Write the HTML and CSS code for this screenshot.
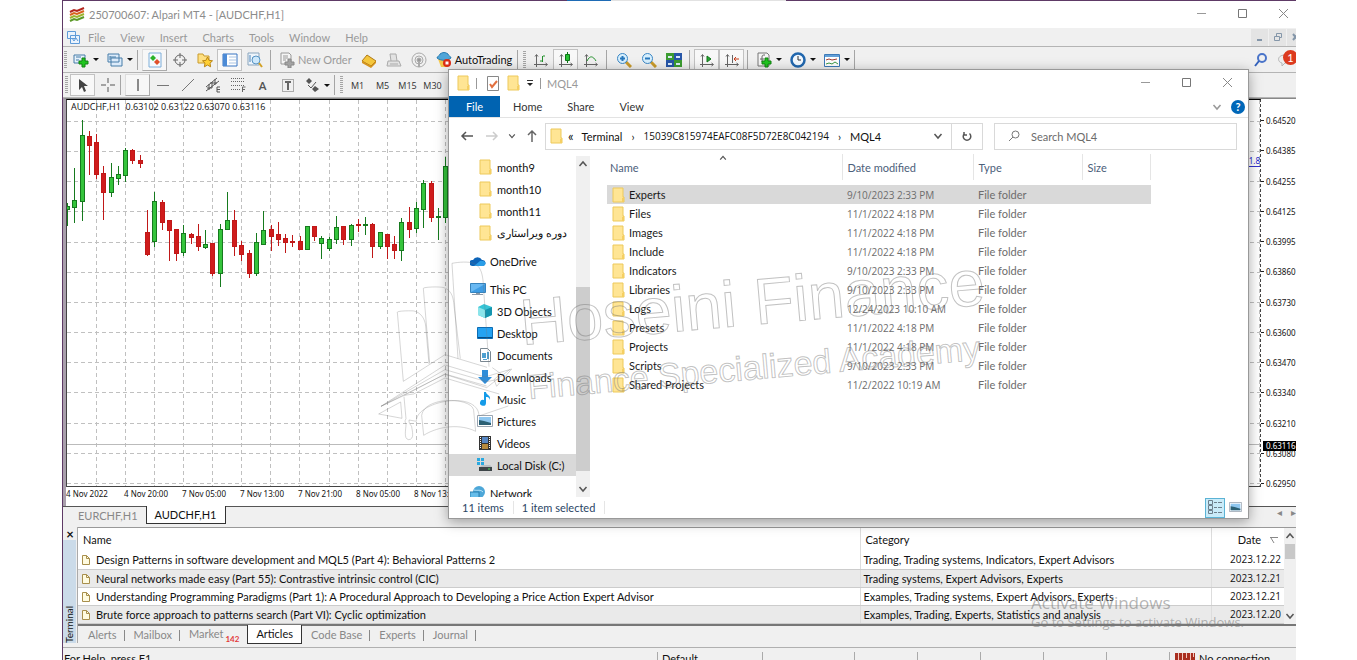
FILE: index.html
```
<!DOCTYPE html>
<html lang="en">
<head>
    <meta charset="UTF-8">
    <meta name="viewport" content="width=device-width, initial-scale=1.0">
    <title>250700607: Alpari MT4 - [AUDCHF,H1]</title>
    <link rel="stylesheet" href="styles.css">
</head>
<body>

<!-- Shared icons -->
<svg class="defs" width="0" height="0">
    <symbol id="folder" viewBox="0 0 13 16">
        <path d="M1 1h10v9h1v5H1z" fill="#ffe594" stroke="#edc95a"/>
        <path d="M10 15v-4l2-1v5z" fill="#f5cf62"/>
    </symbol>
    <symbol id="doc" viewBox="0 0 10 12">
        <path d="M1.500 1.500h4l3 3v6h-7z" fill="#fffbe0" stroke="#a88f4c"/>
        <path d="M5.500 1.500v3h3" fill="none" stroke="#a88f4c"/>
    </symbol>
    <symbol id="min" viewBox="0 0 11 11"><path d="M1 5.500h9" stroke="#999" fill="none"/></symbol>
    <symbol id="max" viewBox="0 0 11 11"><path d="M1.500 1.500h8v8h-8z" stroke="#777" fill="none"/></symbol>
    <symbol id="close" viewBox="0 0 11 11"><path d="M1 1l9 9M10 1l-9 9" stroke="#888" fill="none"/></symbol>
    <symbol id="down" viewBox="0 0 10 10"><path d="M1.500 3L5 7l3.500-4" stroke="#555" stroke-width="1.500" fill="none"/></symbol>
    <symbol id="up" viewBox="0 0 10 10"><path d="M1.500 7L5 3l3.500 4" stroke="#555" stroke-width="1.500" fill="none"/></symbol>
    <symbol id="axes" viewBox="0 0 16 16"><path d="M3.500 3v12M1 12.500h13M2 4.500l1.500-2 1.500 2M12.500 11l2 1.500-2 1.500" stroke="#666" fill="none"/></symbol>
    <symbol id="picture" viewBox="0 0 16 12">
        <path d="M.5.500h15v11H.5z" fill="#fff" stroke="#9aa5b1"/>
        <path d="M2 2h12v8H2z" fill="#8fc7f0"/>
        <path d="M2 5l5 1 7 2v2H2z" fill="#2c6175"/>
    </symbol>
</svg>

<div class="desktop">
    <div class="taskline"><i></i><b></b></div>

    <header class="titlebar">
        <svg class="i16" viewBox="0 0 16 16" fill="none" stroke-width="2">
            <path d="M1 5l4-2 3 1 7-3" stroke="#b3261e"/><path d="M1 8l4-2 3 1 7-3" stroke="#d8641f"/>
            <path d="M1 11l4-2 3 1 7-3" stroke="#9db52e"/><path d="M1 14l4-2 3 1 7-3" stroke="#5b9a28"/>
        </svg>
        <h1>250700607: Alpari MT4 - [AUDCHF,H1]</h1>
        <div class="controls">
            <button aria-label="Minimize"><svg><use href="#min"/></svg></button>
            <button aria-label="Maximize"><svg><use href="#max"/></svg></button>
            <button aria-label="Close"><svg><use href="#close"/></svg></button>
        </div>
    </header>

    <nav class="menubar">
        <svg class="i14" viewBox="0 0 14 14" fill="#eaf3fd" stroke="#5f9bd8">
            <path d="M1.500 1.500h8v7h-8zM4.500 5.500h9v8h-9z"/><path d="M6 8l2 3 2-3 2 3" fill="none"/>
        </svg>
        <button>File</button><button>View</button><button>Insert</button><button>Charts</button><button>Tools</button><button>Window</button><button>Help</button>
        <div class="mdi">
            <button aria-label="Minimize chart"><svg viewBox="0 0 10 10"><path d="M2 8h5" stroke="#8496a9" stroke-width="2"/></svg></button>
            <button aria-label="Restore chart"><svg viewBox="0 0 10 10" fill="none" stroke="#8496a9"><path d="M1.500 4.500h5v4h-5zM3.500 4V1.500h5v4h-2"/></svg></button>
            <button aria-label="Close chart"><svg viewBox="0 0 10 10"><path d="M2 2l5 6M7 2L2 8" stroke="#8496a9" stroke-width="2"/></svg></button>
        </div>
    </nav>

    <div class="toolbar">
        <span class="grip"></span>
        <button class="drop" aria-label="New chart"><svg class="i16" viewBox="0 0 16 16"><path d="M1 3h11v8H1z" fill="#e5f1fb" stroke="#477da8"/><path d="M3 5h5M3 8h3" stroke="#477da8"/><path d="M9 6h3v3h3v3h-3v3H9v-3H6V9h3z" fill="#1fc51f" stroke="#138213"/></svg></button>
        <button class="drop" aria-label="Profiles"><svg class="i16" viewBox="0 0 16 16" fill="#dcebfa" stroke="#477da8"><path d="M4 6h11v8H4zM1 2h11v8H1z"/><path d="M3 5h6M3 4v4"/></svg></button>
        <span class="sep"></span>
        <button class="raised" aria-label="Market Watch"><svg class="i16" viewBox="0 0 16 16"><path d="M2 1h12v14H2z" fill="#f5faff" stroke="#7eaed8"/><path d="M6 3l3 3-3 3-3-3z" fill="#2bb32b"/><path d="M10 7l3 3-3 3-3-3z" fill="#e0502a"/></svg></button>
        <button aria-label="Data Window"><svg class="i16" viewBox="0 0 16 16" fill="none" stroke="#666"><circle cx="8" cy="8" r="5"/><path d="M8 1v5M8 10v5M1 8h5M10 8h5"/></svg></button>
        <button aria-label="Navigator"><svg class="i16" viewBox="0 0 16 16"><path d="M1 2h5l1 2h5v7H1z" fill="#ffe082" stroke="#c99b2c"/><path d="M10.500 5l1.600 3.400 3.400.4-2.500 2.400.6 3.600-3.100-1.800-3.100 1.800.6-3.600L5.500 8.800l3.400-.4z" fill="#ffcf33" stroke="#b98412"/></svg></button>
        <button class="pressed" aria-label="Terminal"><svg class="i16" viewBox="0 0 16 16"><path d="M1 2h14v12H1z" fill="#fff" stroke="#3974c2"/><path d="M1 2h4v12H1z" fill="#4c8bd6"/><path d="M7 5h7M7 8h7M7 11h7" stroke="#aac4e2"/></svg></button>
        <button aria-label="Strategy Tester"><svg class="i16" viewBox="0 0 16 16"><path d="M1 1h11v12H1z" fill="#edf4fb" stroke="#8aa5bd"/><path d="M3 3v7M6 5v4" stroke="#4b83b8"/><circle cx="9" cy="8" r="4" fill="#cde8fb" stroke="#5794c4"/><path d="M12 11l3 4" stroke="#d3a125" stroke-width="2"/></svg></button>
        <span class="sep sep3"></span>
        <button class="text muted"><svg class="i16" viewBox="0 0 16 16"><path d="M2 1h8l2 2v9H2z" fill="#f5f5f5" stroke="#999"/><path d="M4 4h5M4 6h5M4 8h3" stroke="#999"/><path d="M9 7h3v3h3v3h-3v3H9v-3H6v-3h3z" fill="#a3a3a3" stroke="#888"/></svg>New Order</button>
        <button aria-label="MetaEditor"><svg class="i16" viewBox="0 0 16 16"><path d="M1 9l5-6 9 6-5 5z" fill="#f4c63c" stroke="#b07916"/><path d="M1 9v2l9 5 5-5V9l-5 5z" fill="#d5941e"/></svg></button>
        <button aria-label="Virtual hosting"><svg class="i16" viewBox="0 0 16 16" fill="#e2e2e2" stroke="#aaa"><path d="M5 9L4 2h6l1 7M2 9h11l2 5H1z"/><path d="M4 12h8"/></svg></button>
        <button aria-label="Signals"><svg class="i16" viewBox="0 0 16 16" fill="none" stroke="#aaa"><circle cx="8" cy="8" r="7"/><circle cx="8" cy="8" r="4"/><circle cx="8" cy="8" r="2" fill="#999"/><path d="M8 9v6" stroke-width="2"/></svg></button>
        <button class="text"><svg class="i16" viewBox="0 0 16 16"><path d="M2 7h12l-3 8H5z" fill="#f3c74c"/><path d="M1 6c0-2 3-2 3-4 3-2 5-2 8 0 0 2 3 2 3 4-4 3-10 3-14 0z" fill="#4fa5d8" stroke="#287bb1"/><circle cx="11" cy="11" r="4" fill="#dd2d16"/><path d="M9.500 9.500h3v3h-3z" fill="#fff"/></svg>AutoTrading</button>
        <span class="sep"></span><span class="grip"></span>
        <button aria-label="Bar chart"><svg class="i16" viewBox="0 0 16 16"><use href="#axes"/><path d="M9.500 4v6M10 4h2M7 9h2" stroke="#22902a" fill="none"/></svg></button>
        <button class="pressed" aria-label="Candlesticks"><svg class="i16" viewBox="0 0 16 16"><use href="#axes"/><path d="M9.500 0v11" stroke="#0d7818"/><path d="M7.500 2.500h4v6h-4z" fill="#29c335" stroke="#0d7818"/></svg></button>
        <button aria-label="Line chart"><svg class="i16" viewBox="0 0 16 16"><use href="#axes"/><path d="M4 9c3-6 6-5 9 0" stroke="#22902a" fill="none"/></svg></button>
        <span class="sep sep3"></span>
        <button aria-label="Zoom in"><svg class="i16" viewBox="0 0 16 16"><path d="M10 10l5 5" stroke="#c99b2c" stroke-width="3"/><circle cx="6.500" cy="6.500" r="5" fill="#d7effd" stroke="#3b86c4"/><path d="M4 6.500h5M6.500 4v5" stroke="#2878bd" stroke-width="2"/></svg></button>
        <button aria-label="Zoom out"><svg class="i16" viewBox="0 0 16 16"><path d="M10 10l5 5" stroke="#c99b2c" stroke-width="3"/><circle cx="6.500" cy="6.500" r="5" fill="#d7effd" stroke="#3b86c4"/><path d="M4 6.500h5" stroke="#2878bd" stroke-width="2"/></svg></button>
        <button aria-label="Tile windows"><svg class="i16" viewBox="0 0 16 16"><path d="M0 1h8v7H0zM8 8h8v7H8z" fill="#3c9c31"/><path d="M8 1h8v7H8zM0 8h8v7H0z" fill="#2756a8"/><path d="M2 4h4v2H2zM10 4h4v2h-4zM2 11h4v2H2zM10 11h4v2h-4z" fill="#d8eafa"/></svg></button>
        <span class="sep sep3"></span>
        <button class="pressed" aria-label="Auto scroll"><svg class="i16" viewBox="0 0 16 16"><use href="#axes"/><path d="M8 4l4 3-4 3z" fill="#2aa735" stroke="#12761b"/></svg></button>
        <button class="pressed" aria-label="Chart shift"><svg class="i16" viewBox="0 0 16 16"><use href="#axes"/><path d="M8.500 3v8" stroke="#666"/><path d="M10 7h5M12 5l-2 2 2 2" stroke="#c83c18" fill="none"/></svg></button>
        <span class="sep sep3"></span>
        <button class="drop" aria-label="Indicators"><svg class="i16" viewBox="0 0 16 16"><path d="M2 1h9l2 2v11H2z" fill="#f5f5f5" stroke="#777"/><path d="M6 10V5c0-2 1-2 3-2M4 7h4" stroke="#666" fill="none"/><path d="M9 6h3v3h3v3h-3v3H9v-3H6V9h3z" fill="#1fc51f" stroke="#138213"/></svg></button>
        <button class="drop" aria-label="Periods"><svg class="i16" viewBox="0 0 16 16"><circle cx="8" cy="8" r="6.500" fill="#f3f9ff" stroke="#2167ae" stroke-width="2.500"/><path d="M8 4v4h3" stroke="#333" fill="none"/></svg></button>
        <button class="drop" aria-label="Templates"><svg class="i16" viewBox="0 0 16 16"><path d="M.5 2.500h15v12H.5z" fill="#fff" stroke="#3d7ab8"/><path d="M1 3h14v2H1z" fill="#62a0d8"/><path d="M2 8l3-1 3 1 5-1" stroke="#a33a2f" fill="none"/><path d="M2 12l3-1 3 1 3-2 3 2" stroke="#3d9945" fill="none"/></svg></button>
        <span class="sep"></span>
        <div class="notify">
            <button aria-label="Search"><svg class="i14" viewBox="0 0 14 14" fill="none"><circle cx="8" cy="5" r="4" stroke="#4a74c9" stroke-width="2"/><path d="M5 8l-4 5" stroke="#3361bb" stroke-width="2"/></svg></button>
            <button class="messages" aria-label="1 message"><svg class="bubble" viewBox="0 0 14 14"><path d="M7 2c8 0 8 8 0 8l-3 3v-3C-1 9-1 2 7 2z" fill="#eee" stroke="#b5b5b5"/></svg><span class="badge">1</span></button>
        </div>
    </div>

    <div class="toolbar lower">
        <span class="grip"></span>
        <button class="pressed" aria-label="Cursor"><svg class="i16" viewBox="0 0 16 16"><path d="M4 2v11l3-3 2 5 2-1-2-5h4z" fill="#444"/></svg></button>
        <button aria-label="Crosshair"><svg class="i16" viewBox="0 0 16 16"><path d="M8 1v5M8 10v5M1 8h5M10 8h5" stroke="#888" stroke-width="1.500"/></svg></button>
        <span class="sep"></span>
        <button class="raised" aria-label="Vertical line"><svg class="i16" viewBox="0 0 16 16"><path d="M8 2v12" stroke="#666" stroke-width="1.500"/></svg></button>
        <button aria-label="Horizontal line"><svg class="i16" viewBox="0 0 16 16"><path d="M2 8.500h12" stroke="#777"/></svg></button>
        <button aria-label="Trendline"><svg class="i16" viewBox="0 0 16 16"><path d="M2 14L14 2" stroke="#777"/></svg></button>
        <button aria-label="Equidistant channel"><svg class="i16" viewBox="0 0 16 16" stroke="#555" fill="none"><path d="M1 10L12 1M1 14L14 4M4 7v6M7 5v6M10 2v6M2 11h5M5 6h7M15 10h-3v5h3M12 12.500h3"/></svg></button>
        <button aria-label="Fibonacci"><svg class="i16" viewBox="0 0 16 16" stroke="#666" fill="none"><path d="M1 1.500h13M1 4.500h13M1 8.500h13M1 12.500h9" stroke-dasharray="1 1"/><path d="M12.500 15v-5h3M13 12.500h2"/></svg></button>
        <button class="letter">A</button>
        <button aria-label="Text label"><svg class="i16" viewBox="0 0 16 16" stroke="#666" fill="none"><path d="M2.500 2.500h11v12h-11z" stroke-dasharray="1 1"/><path d="M5 5h6M8 5v8" stroke-width="2"/></svg></button>
        <button class="drop arrows" aria-label="Arrows"><svg class="i16" viewBox="0 0 16 16" fill="#555"><path d="M5 1l3 3-3 3-3-3zM11 9l4 3-4 3-3-3z"/><path d="M4 8l3 3 5-6" fill="none" stroke="#555"/></svg></button>
        <span class="sep"></span><span class="grip"></span>
        <button class="period">M1</button><button class="period">M5</button><button class="period">M15</button><button class="period">M30</button>
    </div>

    <main class="chart">
        <div class="plot">
            <svg id="plot" class="plot-svg"></svg>
            <p class="quote">AUDCHF,H1&nbsp; 0.63102 0.63122 0.63070 0.63116</p>
            <span class="level">1.8</span>
        </div>
        <div class="prices">
            <span>0.64520</span><span>0.64385</span><span>0.64255</span><span>0.64125</span><span>0.63995</span><span>0.63860</span><span>0.63730</span><span>0.63600</span><span>0.63470</span><span>0.63340</span><span>0.63210</span><span>0.63080</span><span>0.62950</span>
            <b>0.63116</b>
        </div>
        <div class="times">
            <span>4 Nov 2022</span><span>4 Nov 20:00</span><span>7 Nov 05:00</span><span>7 Nov 13:00</span><span>7 Nov 21:00</span><span>8 Nov 05:00</span><span>8 Nov 13:00</span>
        </div>
    </main>

    <div class="chart-tabs">
        <button>EURCHF,H1</button><button class="active">AUDCHF,H1</button>
        <span class="scrollers"><i>◂</i><i>▸</i></span>
    </div>

    <section class="terminal">
        <aside class="side"><button aria-label="Close terminal">×</button><span>Terminal</span></aside>
        <div class="terminal-main">
            <div class="articles">
                <table>
                    <thead><tr><th>Name</th><th class="cat">Category</th><th class="date">Date <svg width="8" height="7" viewBox="0 0 8 7"><path d="M0 .5h8M1 1l3 5" stroke="#888" fill="none"/></svg></th></tr></thead>
                    <tbody>
                        <tr><td><svg class="doc"><use href="#doc"/></svg>Design Patterns in software development and MQL5 (Part 4): Behavioral Patterns 2</td><td>Trading, Trading systems, Indicators, Expert Advisors</td><td>2023.12.22</td></tr>
                        <tr><td><svg class="doc"><use href="#doc"/></svg>Neural networks made easy (Part 55): Contrastive intrinsic control (CIC)</td><td>Trading systems, Expert Advisors, Experts</td><td>2023.12.21</td></tr>
                        <tr><td><svg class="doc"><use href="#doc"/></svg>Understanding Programming Paradigms (Part 1): A Procedural Approach to Developing a Price Action Expert Advisor</td><td>Examples, Trading systems, Expert Advisors, Experts</td><td>2023.12.21</td></tr>
                        <tr><td><svg class="doc"><use href="#doc"/></svg>Brute force approach to patterns search (Part VI): Cyclic optimization</td><td>Examples, Trading, Experts, Statistics and analysis</td><td>2023.12.20</td></tr>
                    </tbody>
                </table>
                <div class="scroll"><svg><use href="#up"/></svg><i></i><svg class="last"><use href="#down"/></svg></div>
            </div>
            <div class="terminal-tabs">
                <button>Alerts</button><button>Mailbox</button><button>Market<sub>142</sub></button><button class="active">Articles</button><button>Code Base</button><button>Experts</button><button>Journal</button>
            </div>
        </div>
    </section>

    <footer class="statusbar">
        <span class="help">For Help, press F1</span>
        <span class="profile">Default</span>
        <span class="wide"></span><span></span><span></span><span></span><span></span><span></span>
        <span class="conn"><svg width="22" height="12" viewBox="0 0 22 12"><path d="M1 1h20v10H1z" fill="#a92f20"/><path d="M4.500 1v8M8.500 1v10M12.500 1v5M16.500 1v8M19.500 1v4" stroke="#f3c9bf"/></svg>No connection</span>
    </footer>

    <!-- File manager window -->
    <section class="explorer">
        <header class="ex-title">
            <svg class="folder"><use href="#folder"/></svg><i class="bar"></i>
            <svg class="check" viewBox="0 0 12 15"><path d="M.5.500h11v14H.5z" fill="#fff" stroke="#888"/><path d="M3 8l2 3 5-6" fill="none" stroke="#e2703f" stroke-width="2"/></svg>
            <svg class="folder"><use href="#folder"/></svg>
            <svg class="quick" viewBox="0 0 8 8"><path d="M1 1.500h6" stroke="#333"/><path d="M1 4h6L4 7z" fill="#222"/></svg>
            <i class="bar"></i><h2>MQL4</h2>
            <div class="controls">
                <button aria-label="Minimize"><svg><use href="#min"/></svg></button>
                <button aria-label="Maximize"><svg><use href="#max"/></svg></button>
                <button aria-label="Close"><svg><use href="#close"/></svg></button>
            </div>
        </header>
        <nav class="ribbon">
            <button class="file">File</button><button>Home</button><button>Share</button><button>View</button>
            <span class="right"><svg class="i10 pale"><use href="#down"/></svg><button class="q" aria-label="Help">?</button></span>
        </nav>
        <div class="address">
            <svg class="i14" viewBox="0 0 14 14" fill="none" stroke="#555" stroke-width="1.500"><path d="M13 7H2M6 3L2 7l4 4"/></svg>
            <svg class="i14" viewBox="0 0 14 14" fill="none" stroke="#ccc" stroke-width="1.500"><path d="M1 7h11M8 3l4 4-4 4"/></svg>
            <svg class="i8"><use href="#down"/></svg>
            <svg class="i14" viewBox="0 0 14 14" fill="none" stroke="#666" stroke-width="1.500"><path d="M7 13V2M3 6l4-4 4 4"/></svg>
            <div class="path">
                <svg class="folder"><use href="#folder"/></svg>
                <span class="laquo">«</span><a href="#">Terminal</a><i>›</i><a href="#" class="hash">15039C815974EAFC08F5D72E8C042194</a><i>›</i><a href="#">MQL4</a>
                <svg class="i10 push"><use href="#down"/></svg>
                <button class="refresh" aria-label="Refresh"><svg class="i10" viewBox="0 0 10 10" fill="none" stroke="#555" stroke-width="1.500"><path d="M7.500 2.500a3.800 3.800 0 1 1-5 0M2 1v3h3"/></svg></button>
            </div>
            <label class="search">
                <svg class="i12" viewBox="0 0 12 12" fill="none" stroke="#777"><circle cx="7.500" cy="4.500" r="3.500"/><path d="M5 7l-4 4"/></svg>
                <input type="text" placeholder="Search MQL4" aria-label="Search MQL4">
            </label>
        </div>
        <div class="ex-body">
            <ul class="tree">
                <li><svg class="folder"><use href="#folder"/></svg>month9</li>
                <li><svg class="folder"><use href="#folder"/></svg>month10</li>
                <li><svg class="folder"><use href="#folder"/></svg>month11</li>
                <li><svg class="folder"><use href="#folder"/></svg><span dir="rtl" lang="fa">دوره ویراستاری</span></li>
                <li class="root"><svg viewBox="0 0 16 16"><path d="M2 13a3 3 0 0 1 1-6 5 5 0 0 1 9 0 3 3 0 0 1 1 6z" fill="#0d64b8"/><path d="M4 13l6-5c6-1 7 4 3 5z" fill="#2a9ee8"/></svg>OneDrive</li>
                <li class="root"><svg viewBox="0 0 16 16"><path d="M.5 2.500h15v9H.5z" fill="#68b8f2" stroke="#3683bd"/><path d="M1 11l14-8v8z" fill="#3d9ce4"/><path d="M6 12h4v1h3v1H2v-1h4z" fill="#8c9aa8"/></svg>This PC</li>
                <li><svg viewBox="0 0 16 16"><path d="M1 4l6-3 8 3v8l-7 3-7-3z" fill="#35c4d6"/><path d="M1 4l7 3v8l-7-3z" fill="#8be4ea"/><path d="M8 7l7-3v8l-7 3z" fill="#1595af"/></svg>3D Objects</li>
                <li><svg viewBox="0 0 16 16"><path d="M.5 2.500h15v11H.5z" fill="#24a2f2" stroke="#0d6cb3"/><path d="M1 12h14v1H1z" fill="#064b83"/></svg>Desktop</li>
                <li><svg viewBox="0 0 16 16"><path d="M3.500 1.500h7l3 3v10h-10z" fill="#fff" stroke="#7a8791"/><path d="M5 6h4v5H5zM10 5h2v7h-2zM6 12h4v1H6z" fill="#4ea0d1"/></svg>Documents</li>
                <li><svg viewBox="0 0 16 16"><path d="M5 1h6v7h4l-7 7-7-7h4z" fill="#2f8dd9"/></svg>Downloads</li>
                <li><svg viewBox="0 0 16 16"><path d="M7 1h2c0 3 5 3 4 8-1-3-2-3-4-3v6a3 3 0 1 1-2-3z" fill="#149be8"/></svg>Music</li>
                <li><svg viewBox="0 -2 16 16"><use href="#picture" width="16" height="12"/></svg>Pictures</li>
                <li><svg viewBox="0 0 16 16"><path d="M2 1h12v14H2z" fill="#333"/><path d="M5 2h6v6H5z" fill="#5787c4"/><path d="M5 9h6v5H5z" fill="#b58a3f"/><path d="M3.500 2v12M12.500 2v12" stroke="#fff" stroke-dasharray="1 1"/></svg>Videos</li>
                <li class="selected"><svg viewBox="0 0 16 16"><path d="M0 1h3v3H0zM4 1h3v3H4zM0 5h3v3H0zM4 5h3v3H4z" fill="#2aa9e0"/><path d="M3 10l2-2h8l2 2z" fill="#b8bec2"/><path d="M2 10h13v4H2z" fill="#3d4548"/><path d="M11 12h2" stroke="#4be05a"/></svg>Local Disk (C:)</li>
                <li class="root"><svg viewBox="0 0 16 16"><circle cx="9" cy="7" r="6" fill="#4da7d8"/><path d="M4 5c4 1 6-1 9 2" stroke="#b9e4f8" fill="none"/><path d="M0 7h9v6H0z" fill="#66bdea" stroke="#297fae"/></svg>Network</li>
            </ul>
            <div class="tree-scroll"><svg><use href="#up"/></svg><i></i><svg><use href="#down"/></svg></div>
            <div class="files">
                <svg class="sort"><use href="#up"/></svg>
                <table>
                    <thead><tr><th class="n">Name</th><th class="d">Date modified</th><th class="t">Type</th><th class="s">Size</th></tr></thead>
                    <tbody>
                        <tr class="selected"><td><svg class="folder"><use href="#folder"/></svg>Experts</td><td>9/10/2023 2:33 PM</td><td>File folder</td><td></td></tr>
                        <tr><td><svg class="folder"><use href="#folder"/></svg>Files</td><td>11/1/2022 4:18 PM</td><td>File folder</td><td></td></tr>
                        <tr><td><svg class="folder"><use href="#folder"/></svg>Images</td><td>11/1/2022 4:18 PM</td><td>File folder</td><td></td></tr>
                        <tr><td><svg class="folder"><use href="#folder"/></svg>Include</td><td>11/1/2022 4:18 PM</td><td>File folder</td><td></td></tr>
                        <tr><td><svg class="folder"><use href="#folder"/></svg>Indicators</td><td>9/10/2023 2:33 PM</td><td>File folder</td><td></td></tr>
                        <tr><td><svg class="folder"><use href="#folder"/></svg>Libraries</td><td>9/10/2023 2:33 PM</td><td>File folder</td><td></td></tr>
                        <tr><td><svg class="folder"><use href="#folder"/></svg>Logs</td><td>12/24/2023 10:10 AM</td><td>File folder</td><td></td></tr>
                        <tr><td><svg class="folder"><use href="#folder"/></svg>Presets</td><td>11/1/2022 4:18 PM</td><td>File folder</td><td></td></tr>
                        <tr><td><svg class="folder"><use href="#folder"/></svg>Projects</td><td>11/1/2022 4:18 PM</td><td>File folder</td><td></td></tr>
                        <tr><td><svg class="folder"><use href="#folder"/></svg>Scripts</td><td>9/10/2023 2:33 PM</td><td>File folder</td><td></td></tr>
                        <tr><td><svg class="folder"><use href="#folder"/></svg>Shared Projects</td><td>11/2/2022 10:19 AM</td><td>File folder</td><td></td></tr>
                    </tbody>
                </table>
            </div>
        </div>
        <footer class="ex-status">
            <span>11 items</span><span>1 item selected</span>
            <div class="views">
                <button class="on" aria-label="Details"><svg viewBox="0 0 16 16" fill="none" stroke="#6d7f8c"><path d="M1.500 1.500h4v4h-4zM1.500 6.500h4v4h-4zM1.500 11.500h4v3h-4z"/><path d="M7 3.500h3M11 3.500h4M7 8.500h3M11 8.500h4M7 13.500h3M11 13.500h4"/></svg></button>
                <button aria-label="Large icons"><svg class="thumb"><use href="#picture"/></svg></button>
            </div>
        </footer>
    </section>

    <!-- Watermarks -->
    <svg class="watermark">
        <g transform="translate(308 260) scale(.3333)">
            <path d="M97 364L79 157c-1-5 45-5 50-4 22 5 33 25 35 45l10 114M97 364l125-80 46 14 80 24M176 310L157 85c0-4 50-6 62-2 20 7 27 25 29 45l20 168M261 296L243 10c20-4 50-6 64 0 20 7 26 26 29 50l18 260"/>
            <path d="M30 439l192-124 120 36 80-24-45 52-8-20 20-18-25-18M30 439l192-110 125 36 40-8M30 439l192-96 125 40 70-55M100 406l122-64 125 36M30 439l70-33 28-4 94-48 135 40 28 8M23 462l66-36 4 49zM99 410l6 66c-5 8-2 10 0 17 0 15-8 44 8 46 18-1 11-25 9-39-3-7-8-7-8-20l22 4c-2-60 186-96 188-16l88-30M158 526l-6-60c10-60 154-54 156-14l6 62c-44-22-108-18-156 12z"/>
        </g>
        <text class="wm-big" transform="translate(459 345) rotate(-5)">Hoseini Finance</text>
        <text class="wm-small" transform="translate(466 399) rotate(-5)">Finance Specialized Academy</text>
    </svg>
    <div class="activate"><p>Activate Windows</p><small>Go to Settings to activate Windows.</small></div>
</div>

<script src="chart.js"></script>
</body>
</html>
```
FILE: styles.css
```
* {
    margin: 0;
    padding: 0;
    box-sizing: border-box;
}

body {
    background: #fff;
    font-family: Lato, "Noto Sans", sans-serif;
    font-size: 11px;
    color: #111;
}

button, input {
    font: inherit;
    color: inherit;
    background: none;
    border: none;
}

a {
    color: inherit;
    text-decoration: none;
}

table {
    border-collapse: collapse;
    table-layout: fixed;
}

th {
    font-weight: normal;
    text-align: left;
}

svg {
    flex: none;
}

.defs {
    position: absolute;
}

.i16 { width: 16px; height: 16px; }
.i14 { width: 14px; height: 14px; }
.i12 { width: 12px; height: 12px; }
.i10 { width: 10px; height: 10px; }
.i8 { width: 8px; height: 8px; }
.folder { width: 13px; height: 16px; }

.desktop {
    position: relative;
    height: 100vh;
    margin: 0 61px 0 62px;
    border-left: 1px solid #5e3a66;
    background: #f0f0f0;
    overflow: hidden;
    display: flex;
    flex-direction: column;
}

.taskline {
    display: flex;
    flex: none;
    height: 1px;
    padding-left: 504px;
    background: #5e3a66;
}

.taskline i { width: 44px; background: #1e6bb5; }
.taskline b { width: 175px; background: #e2e2e2; }

/* Title and menu */
.titlebar {
    display: flex;
    align-items: center;
    flex: none;
    height: 27px;
    padding-left: 6px;
    gap: 4px;
    background: #fff;
    color: #8c8c8c;
}

.titlebar h1, .ex-title h2 {
    font-size: 11px;
    font-weight: normal;
}

.controls {
    display: flex;
    margin-left: auto;
}

.controls button {
    width: 41px;
    height: 26px;
}

.controls svg {
    width: 11px;
    height: 11px;
}

.titlebar .controls {
    margin-right: -8px;
}

.menubar {
    display: flex;
    align-items: center;
    flex: none;
    height: 19px;
    padding-left: 3px;
    border-bottom: 1px solid #b4b4b4;
    color: #999;
}

.menubar > button {
    padding: 0 7px 0 8px;
}

.mdi {
    display: flex;
    gap: 1px;
    margin-left: auto;
    margin-right: -8px;
}

.mdi button {
    width: 17px;
    height: 17px;
    background: #e4e4e4;
}

.mdi svg {
    width: 10px;
    height: 10px;
}

/* Toolbars */
.toolbar {
    display: flex;
    align-items: center;
    flex: none;
    height: 26px;
    border-bottom: 1px solid #b4b4b4;
}

.toolbar button {
    display: flex;
    align-items: center;
    justify-content: center;
    flex: none;
    width: 25px;
    height: 22px;
}

.toolbar .drop {
    width: 34px;
    gap: 4px;
}

.toolbar .drop::after {
    content: "";
    border: 3px solid transparent;
    border-top-color: #111;
    border-bottom: none;
}

.toolbar .text {
    width: auto;
    padding: 0 5px 0 4px;
    gap: 3px;
}

.muted {
    color: #9b9b9b;
}

.toolbar .pressed {
    border: 1px solid #c2c2c2;
    background: #f8f8f8;
}

.toolbar .raised {
    background: #f7f7f7;
    border: 1px solid #ddd;
    border-right-color: #aaa;
    border-bottom-color: #aaa;
}

.grip {
    width: 3px;
    height: 18px;
    margin: 0 2px 0 1px;
    background: repeating-linear-gradient(#a5a5a5 0 1px, #f0f0f0 1px 2px);
}

.sep {
    width: 1px;
    height: 20px;
    margin-right: 4px;
    background: #a5a5a5;
}

.sep3 {
    margin-left: 3px;
}

.toolbar .letter {
    font-weight: bold;
    font-size: 11px;
    color: #555;
}

.toolbar .period {
    font-family: "Open Sans", sans-serif;
    font-size: 9px;
    color: #333;
}

.lower {
    height: 25px;
    padding-left: 1px;
}

.notify {
    display: flex;
    margin-left: auto;
    margin-right: -7px;
}

.notify button {
    position: relative;
    width: 28px;
}

.notify .messages {
    justify-content: flex-start;
    padding-left: 3px;
}

.bubble {
    width: 14px;
    height: 16px;
}

.badge {
    position: absolute;
    left: 8px;
    top: 1px;
    width: 15px;
    height: 15px;
    border-radius: 50%;
    background: #dc3a1e;
    color: #fff;
    line-height: 15px;
    text-align: center;
}

/* Chart */
.chart {
    display: grid;
    grid-template-columns: 1fr 35px;
    grid-template-rows: 1fr 19px;
    flex: 1;
    min-height: 0;
    border-left: 3px solid #a99fac;
    border-top: 1px solid #888;
    background: #fff;
    font-family: "Noto Sans", sans-serif;
    font-size: 8px;
    color: #111;
}

.plot {
    position: relative;
    border: 1px solid #444;
    border-top-color: #000;
    border-right-style: dashed;
    min-height: 0;
}

.plot-svg {
    display: block;
    width: 100%;
    height: 100%;
}

.quote {
    position: absolute;
    left: 4px;
    top: 1px;
    font-family: "Open Sans", sans-serif;
    font-size: 9px;
    line-height: 12px;
}

.level {
    position: absolute;
    right: 0;
    top: 55px;
    border-bottom: 1px solid #33c;
    color: #22c;
}

.prices {
    position: relative;
    display: flex;
    flex-direction: column;
    justify-content: space-between;
    padding-top: 19px;
    line-height: 6px;
}

.prices span::before {
    content: "";
    display: inline-block;
    width: 3px;
    height: 1px;
    margin-right: 2px;
    vertical-align: 3px;
    background: #222;
}

.prices b {
    position: absolute;
    left: 2px;
    right: 0;
    bottom: 36px;
    padding-left: 3px;
    background: #000;
    color: #fff;
    font-weight: normal;
    line-height: 10px;
}

.times {
    grid-column: 1 / 3;
    display: flex;
    line-height: 14px;
    overflow: hidden;
}

.times span {
    flex: none;
    width: 58px;
    white-space: nowrap;
}

.chart-tabs {
    display: flex;
    flex: none;
    height: 18px;
    border-top: 1px solid #555;
    color: #888;
}

.chart-tabs button {
    padding: 0 8px 0 15px;
}

.chart-tabs .active, .terminal-tabs .active {
    margin-top: -1px;
    padding: 0 8px;
    border: 1px solid #333;
    border-top: none;
    background: #fff;
    color: #111;
}

.scrollers {
    display: flex;
    gap: 9px;
    margin-left: auto;
    font-family: "DejaVu Sans", sans-serif;
    font-size: 10px;
}

.scrollers i {
    font-style: normal;
}

/* Terminal */
.terminal {
    display: flex;
    flex: none;
    height: 123px;
    padding-top: 3px;
}

.side {
    display: flex;
    flex-direction: column;
    width: 14px;
    height: 116px;
}

.side button {
    height: 13px;
    line-height: 10px;
    font-weight: bold;
    font-size: 13px;
}

.side span {
    flex: 1;
    writing-mode: vertical-rl;
    transform: rotate(180deg);
    width: 13px;
    line-height: 13px;
    font-size: 10px;
    background: #cbdbe9;
}

.terminal-main {
    flex: 1;
    min-width: 0;
    height: 116px;
    border-left: 1px solid #aaa;
}

.articles {
    display: flex;
    border-top: 1px solid #999;
    border-bottom: 2px solid #777;
    background: #fff;
}

.articles table {
    flex: 1;
}

.articles th {
    height: 23px;
    padding-left: 5px;
}

.articles td {
    height: 18px;
    padding-left: 3px;
    border-bottom: 1px solid #ccc;
    line-height: 15px;
    white-space: nowrap;
    overflow: hidden;
}

.articles td + td, .articles th + th {
    border-left: 1px solid #ddd;
}

.articles tr:nth-child(even) {
    background: #eaeaea;
}

.articles .cat { width: 351px; }
.articles .date { width: 73px; text-align: right; padding-right: 6px; }
.articles .date svg { margin-left: 6px; }
.articles td:last-child { text-align: right; padding-right: 3px; }

/* numbers run wide in Lato */
.hash, .articles td:last-child, .files td:nth-child(2) {
    font-family: "Open Sans", sans-serif;
    font-size: 10px;
}

.doc {
    width: 10px;
    height: 12px;
    margin-right: 5px;
    vertical-align: -2px;
}

.scroll {
    display: flex;
    flex-direction: column;
    width: 12px;
    padding: 3px 1px;
    background: #f0f0f0;
}

.scroll svg { width: 10px; height: 10px; }
.scroll i { height: 15px; margin-top: 3px; background: #c8c8c8; }
.scroll .last { margin-top: auto; }

.terminal-tabs {
    display: flex;
    height: 18px;
    padding-left: 1px;
    color: #888;
}

.terminal-tabs button {
    position: relative;
    padding: 0 8px 0 9px;
    line-height: 16px;
}

.terminal-tabs button:not(.active)::after {
    content: "";
    position: absolute;
    right: 0;
    top: 4px;
    height: 11px;
    border-right: 1px solid #888;
}

.terminal-tabs button:nth-child(3)::after {
    display: none;
}

.terminal-tabs .active {
    padding: 0 8px;
}

.terminal-tabs sub {
    margin-left: 2px;
    font-size: 8px;
    font-weight: bold;
    line-height: 8px;
    color: #e23a3a;
}

.statusbar {
    display: flex;
    flex: none;
    height: 13px;
    border-top: 1px solid #b0b0b0;
    overflow: hidden;
}

.statusbar span {
    height: 20px;
    margin-top: 4px;
    padding-left: 4px;
    border-left: 1px solid #aaa;
    flex: 0 0 63px;
    white-space: nowrap;
}

.statusbar .help { flex: 1; padding-left: 1px; border: none; }
.statusbar .profile { flex-basis: 105px; }
.statusbar .wide { flex-basis: 92px; }
.statusbar .conn { flex-basis: 127px; }
.statusbar svg { margin-right: 3px; vertical-align: -1px; }

/* File manager */
.explorer {
    position: absolute;
    left: 385px;
    right: 47px;
    top: 69px;
    border: 1px solid #999;
    background: #fff;
    box-shadow: 0 3px 12px rgba(0, 0, 0, .35);
}

.ex-title {
    display: flex;
    align-items: center;
    height: 26px;
    padding-left: 8px;
    color: #999;
}

.ex-title .bar {
    width: 1px;
    height: 11px;
    margin: 0 6px;
    background: #999;
}

.ex-title .check { width: 12px; height: 15px; margin: 0 8px 0 4px; }
.quick { width: 8px; height: 8px; margin: 0 0 0 6px; }

.ribbon {
    display: flex;
    height: 22px;
    border-bottom: 1px solid #e3e3e3;
    color: #333;
}

.ribbon > button {
    padding: 0 12px 0 13px;
}

.ribbon .file {
    width: 51px;
    padding: 0;
    background: #0063b1;
    color: #fff;
}

.ribbon .right {
    display: flex;
    align-items: center;
    gap: 9px;
    margin-left: auto;
    padding-right: 3px;
}

.pale { opacity: .6; }

.q {
    width: 14px;
    height: 14px;
    border-radius: 50%;
    background: #0067b8;
    color: #fff;
    font-weight: bold;
    line-height: 14px;
}

.address {
    display: flex;
    align-items: center;
    height: 36px;
    padding: 0 11px;
    gap: 11px;
}

.address > .i8 { margin: 0 -2px; }

.path, .search {
    display: flex;
    align-items: center;
    height: 27px;
    border: 1px solid #d9d9d9;
}

.path {
    flex: 1;
    margin-left: -5px;
    padding-left: 4px;
}

.path .laquo { margin: 0 8px 0 5px; font-size: 13px; }
.path i { margin: 0 9px; font-style: normal; }
.push { margin: 0 8px 0 auto; }

.refresh {
    width: 31px;
    height: 25px;
    border-left: 1px solid #d9d9d9;
}

.search {
    flex: 0 0 243px;
    padding-left: 13px;
    gap: 11px;
}

.search input {
    width: 180px;
    outline: none;
}

.search input::placeholder {
    color: #6b6b6b;
}

.ex-body {
    display: flex;
    height: 343px;
}

.tree {
    flex: none;
    width: 127px;
    padding-top: 2px;
    list-style: none;
    overflow: hidden;
}

.tree li {
    display: flex;
    align-items: center;
    height: 22px;
    padding-left: 28px;
    gap: 4px;
    white-space: nowrap;
}

.tree li svg { width: 16px; height: 16px; }
.tree li .folder { width: 13px; margin: 0 1px 0 2px; }
.tree .root { margin-top: 6px; padding-left: 21px; }
.tree .selected { background: #d9d9d9; }

.tree-scroll {
    display: flex;
    flex-direction: column;
    align-items: center;
    justify-content: space-between;
    width: 14px;
    margin-top: 2px;
    padding: 3px 0;
    background: #f0f0f0;
}

.tree-scroll svg { width: 10px; height: 10px; }
.tree-scroll i { width: 14px; height: 184px; margin: 104px 0 0; background: #cdcdcd; }

.files {
    position: relative;
    flex: 1;
    padding-left: 17px;
}

.sort {
    position: absolute;
    left: 129px;
    top: 0;
    width: 8px;
    height: 8px;
}

.files table {
    width: 544px;
}

.files th {
    height: 26px;
    padding-left: 5px;
    border-right: 1px solid #e5e5e5;
    color: #4c607a;
}

.files .n { width: 235px; padding-left: 3px; }
.files .d { width: 131px; }
.files .t { width: 109px; }

.files tbody::before {
    content: "";
    display: block;
    height: 5px;
}

.files td {
    height: 19px;
    padding-left: 5px;
    line-height: 16px;
    color: #6d6d6d;
}

.files td:first-child {
    color: #1a1a1a;
}

.files td .folder {
    margin-right: 4px;
    vertical-align: -4px;
}

.files .selected {
    background: #d9d9d9;
}

.ex-status {
    display: flex;
    align-items: center;
    height: 21px;
    padding: 0 3px 0 13px;
    color: #2b4565;
}

.ex-status span {
    padding-right: 9px;
    margin-right: 8px;
    border-right: 1px solid #e5e5e5;
}

.views {
    display: flex;
    margin-left: auto;
}

.views button {
    width: 20px;
    height: 20px;
}

.views .on {
    border: 1px solid #5bb3d5;
    background: #c9ebf9;
}

.views svg { width: 16px; height: 16px; }
.views .thumb { width: 13px; height: 10px; }

/* Watermarks */
.watermark {
    position: absolute;
    inset: 0;
    width: 100%;
    height: 100%;
    pointer-events: none;
    fill: none;
    stroke: #777;
    stroke-opacity: .45;
}

.watermark path {
    stroke-width: 2px;
}

.wm-big, .wm-small {
    font-family: "Liberation Sans", Arial, sans-serif;
    font-size: 65px;
    stroke-width: 1px;
}

.wm-small {
    font-size: 34px;
}

.activate {
    position: absolute;
    right: 52px;
    bottom: 29px;
    color: rgba(120, 120, 120, .55);
    font-family: "Open Sans", sans-serif;
}

.activate p {
    font-size: 17px;
    line-height: 22px;
}

.activate small {
    display: block;
    font-size: 13px;
    line-height: 17px;
}
```
FILE: chart.js
```
// wick top, wick bottom, body top, body bottom, up (1) or down (0)
const candles = [
    [103, 126, 107, 110, 1], [68, 123, 101, 108, 1], [20, 121, 36, 102, 1], [31, 75, 37, 46, 0],
    [34, 79, 43, 75, 0], [66, 120, 74, 93, 0], [63, 97, 78, 93, 1], [66, 85, 75, 79, 1],
    [48, 82, 51, 76, 1], [49, 64, 51, 61, 0], [55, 68, 61, 64, 0], [110, 156, 133, 155, 0],
    [92, 147, 102, 142, 1], [100, 130, 103, 123, 0], [120, 161, 121, 131, 0], [129, 161, 130, 154, 0],
    [125, 156, 134, 153, 1], [133, 144, 135, 138, 0], [124, 151, 137, 147, 0], [130, 149, 145, 148, 1],
    [143, 176, 144, 174, 0], [124, 187, 130, 174, 1], [92, 130, 121, 130, 1], [110, 156, 121, 147, 0],
    [141, 161, 146, 155, 0], [150, 178, 154, 174, 0], [133, 176, 143, 174, 1], [111, 145, 131, 145, 1],
    [125, 151, 130, 137, 0], [122, 146, 135, 140, 0], [134, 153, 139, 143, 0], [135, 147, 142, 143, 0],
    [136, 150, 142, 150, 0], [127, 150, 127, 150, 1], [126, 141, 127, 137, 0], [136, 159, 139, 144, 1],
    [137, 151, 140, 149, 1], [116, 144, 128, 140, 1], [127, 145, 127, 140, 0], [124, 146, 126, 140, 1],
    [119, 132, 125, 126, 0], [117, 135, 125, 126, 1], [123, 158, 125, 147, 0], [133, 149, 133, 147, 1],
    [135, 159, 135, 147, 0], [136, 159, 145, 151, 0], [118, 161, 123, 151, 1], [107, 138, 123, 130, 0],
    [102, 133, 109, 129, 1], [80, 128, 84, 110, 1], [81, 122, 84, 118, 0], [108, 140, 117, 118, 1],
    [57, 123, 67, 118, 1]
];

const plot = document.getElementById("plot");
let out = "";

for (let i = 0; i < 42; i++) {
    const x = Math.round(29 + i * 29.07) + 0.5;
    out += `<path d="M${x} 0V400" stroke="#c0c0c0" stroke-dasharray="4 3"/>`;
}
for (let i = 0; i < 13; i++) {
    const y = Math.round(21 + i * 30.15) + 0.5;
    out += `<path d="M0 ${y}H1400" stroke="#c0c0c0" stroke-dasharray="4 3"/>`;
}
out += `<path d="M0 344.5H1400" stroke="#bbb"/>`;

candles.forEach(([top, bottom, open, close, up], i) => {
    const x = Math.round(i * 7.27);
    const line = up ? "#167a1e" : "#c01818";
    const fill = up ? "#35c43c" : "#cf1c1c";
    out += `<path d="M${x + 0.5} ${top}V${bottom}" stroke="${line}"/>`;
    out += `<rect x="${x - 1.5}" y="${open - 0.5}" width="4" height="${Math.max(close - open, 1)}" fill="${fill}" stroke="${line}"/>`;
});

plot.innerHTML = out;
```
